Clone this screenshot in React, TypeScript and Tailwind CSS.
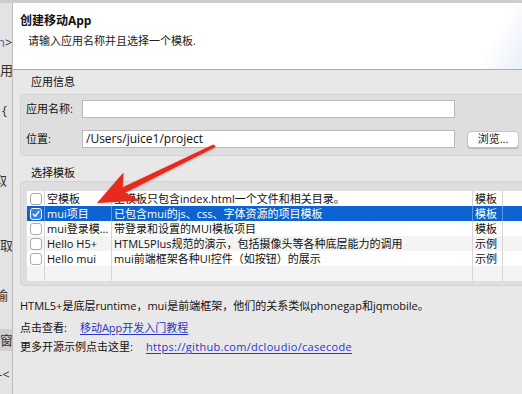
import { Fragment } from "react";

const font = { fontFamily: '"Open Sans", "Noto Sans CJK SC", sans-serif' };

type Row = { name: string; desc: string; kind: string; checked?: boolean };

const rows: Row[] = [
  { name: "空模板", desc: "空模板只包含index.html一个文件和相关目录。", kind: "模板" },
  { name: "mui项目", desc: "已包含mui的js、css、字体资源的项目模板", kind: "模板", checked: true },
  { name: "mui登录模...", desc: "带登录和设置的MUI模板项目", kind: "模板" },
  { name: "Hello H5+", desc: "HTML5Plus规范的演示，包括摄像头等各种底层能力的调用", kind: "示例" },
  { name: "Hello mui", desc: "mui前端框架各种UI控件（如按钮）的展示", kind: "示例" },
  { name: "", desc: "", kind: "" },
];

function EditorStrip() {
  // the code editor peeking out behind the dialog
  return (
    <div className="w-[12px] shrink-0 overflow-hidden bg-[#e3e3e3] text-[13px] leading-[16px] text-[#333] flex flex-col">
      <div className="h-[31px]" />
      <div className="h-[16px] whitespace-nowrap -ml-[3px]">
        <span className="text-[#3d6db5]">n</span>&gt;
      </div>
      <div className="h-[12px]" />
      <div className="h-[16px] whitespace-nowrap">用</div>
      <div className="h-[24px]" />
      <div className="h-[16px] whitespace-nowrap pl-[2px]">{"{"}</div>
      <div className="h-[54px]" />
      <div className="h-[16px] whitespace-nowrap -ml-[6px]">取</div>
      <div className="h-[49px]" />
      <div className="h-[16px] whitespace-nowrap">取</div>
      <div className="h-[34px]" />
      <div className="h-[16px] whitespace-nowrap -ml-[5px]">输</div>
      <div className="h-[26px]" />
      <div className="h-[22px] whitespace-nowrap bg-[#cfcfcf] pt-[3px] -ml-[4px] pl-[4px]">窗</div>
      <div className="h-[15px]" />
      <div className="h-[16px] whitespace-nowrap -ml-[2px]">-&lt;</div>
    </div>
  );
}

function Checkbox({ checked }: { checked?: boolean }) {
  if (checked) {
    return (
      <div className="w-[12px] h-[12px] rounded-[3px] border border-white bg-[#2f7fe6] flex items-center justify-center">
        <svg width="8" height="8" viewBox="0 0 8 8">
          <path d="M1.2 4.2 L3.2 6.2 L6.8 1.6" stroke="white" strokeWidth="1.4" fill="none" strokeLinecap="round" strokeLinejoin="round" />
        </svg>
      </div>
    );
  }
  return <div className="w-[12px] h-[12px] rounded-[3px] border border-[#a9a9a9] bg-white" />;
}

function TemplateTable() {
  return (
    <div className="bg-white flex flex-col">
      {rows.map((r, i) => {
        const selected = r.checked;
        const bg = selected ? "bg-[#0d63cf] text-white" : i % 2 === 1 ? "bg-[#f4f4f4] text-[#111]" : "bg-white text-[#111]";
        const line = selected ? "border-[#5f97dc]" : "border-[#d6d6d6]";
        return (
          <div key={i} className={`flex h-[15px] leading-[15px] text-[11px] ${bg}`}>
            <div className={`w-[18px] shrink-0 border-r ${line} flex items-center pl-[3px]`}>
              {r.name && <Checkbox checked={r.checked} />}
            </div>
            <div className={`w-[67px] shrink-0 border-r ${line} pl-[2px] whitespace-nowrap overflow-hidden`}>{r.name}</div>
            <div className={`w-[361px] shrink-0 border-r ${line} pl-[2px] whitespace-nowrap overflow-hidden`}>{r.desc}</div>
            <div className={`w-[30px] shrink-0 border-r ${line} pl-[2px] whitespace-nowrap`}>{r.kind}</div>
            <div className="flex-1" />
          </div>
        );
      })}
    </div>
  );
}

function Arrow() {
  return (
    <svg className="absolute left-0 top-0 pointer-events-none" width="522" height="394" viewBox="0 0 522 394">
      <defs>
        <filter id="sh" x="-10%" y="-10%" width="120%" height="120%">
          <feDropShadow dx="0" dy="1" stdDeviation="1" floodColor="#000" floodOpacity="0.25" />
        </filter>
      </defs>
      <polygon
        filter="url(#sh)"
        fill="#e8291c"
        points="213.4,144.6 122.7,187.3 123.5,172.5 97,203 140,200.5 125.3,192.7 214.6,147.4 215.5,146"
      />
    </svg>
  );
}

export default function App() {
  return (
    <div className="relative w-[522px] h-[394px] overflow-hidden bg-[#d0d0d0]" style={font}>
      <div className="h-[3px] bg-[#cdcdcd]" />
      <div className="flex h-[391px]">
        <EditorStrip />
        <div className="w-[560px] shrink-0 flex flex-col border-l border-[#bdbdbd] bg-[#e8e8e8]">
          <div className="h-[67px] shrink-0 border-b border-[#acacac] bg-[linear-gradient(118deg,#ffffff_84%,#eef2fb_90%,#dfe6f6_100%)] pl-[7px] pt-[9px]">
            <div className="text-[12px] leading-[17px] font-bold text-[#111]">创建移动App</div>
            <div className="text-[11px] leading-[16px] text-[#222] pl-[8px] mt-[4px]">请输入应用名称并且选择一个模板.</div>
          </div>

          <div className="flex flex-col pl-[7px] pt-[4px] text-[11px] text-[#111]">
            <div className="h-[16px] leading-[16px] pl-[11px]">应用信息</div>
            <div className="mt-[4px] h-[62px] rounded-[4px] border border-[#d3d3d3] bg-[#dedede] pl-[5px] pt-[5px] flex flex-col gap-[12px]">
              <div className="flex items-center h-[18px]">
                <div className="w-[56px] shrink-0">应用名称:</div>
                <div className="w-[373px] h-[18px] bg-white border border-[#b9b9b9]" />
              </div>
              <div className="flex items-center h-[18px]">
                <div className="w-[56px] shrink-0">位置:</div>
                <div className="w-[373px] h-[18px] bg-white border border-[#b9b9b9] pl-[3px] leading-[16px] text-[12px]">/Users/juice1/project</div>
                <div className="ml-[12px] w-[52px] h-[17px] rounded-[4px] bg-white border border-[#c4c4c4] shadow-[0_1px_0_#b8b8b8] flex items-center justify-center text-[11px]">
                  浏览...
                </div>
              </div>
            </div>

            <div className="mt-[9px] h-[16px] leading-[16px] pl-[11px]">选择模板</div>
            <div className="h-[105px] rounded-[4px] border border-[#d3d3d3] bg-[#dedede] pl-[6px] pt-[9px]">
              <TemplateTable />
            </div>

            <div className="mt-[12px] h-[15px] leading-[15px]">
              HTML5+是底层runtime，mui是前端框架，他们的关系类似phonegap和jqmobile。
            </div>
            <div className="mt-[7px] h-[15px] leading-[15px] flex">
              <span>点击查看:</span>
              <span className="ml-[13px] text-[#2a36c8] underline underline-offset-[2px]">移动App开发入门教程</span>
            </div>
            <div className="mt-[4px] h-[15px] leading-[15px] flex">
              <span>更多开源示例点击这里:</span>
              <span className="ml-[13px] text-[#2a36c8] underline underline-offset-[2px] tracking-[0.3px]">
                https://github.com/dcloudio/casecode
              </span>
            </div>
          </div>
        </div>
      </div>
      <Arrow />
    </div>
  );
}
